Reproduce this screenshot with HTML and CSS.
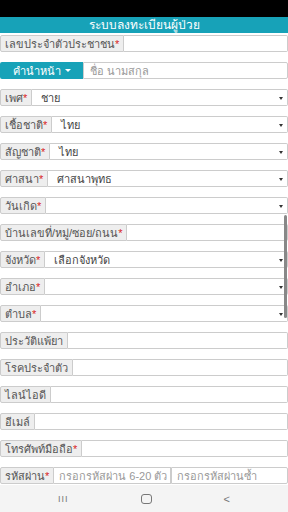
FILE: index.html
```html
<!DOCTYPE html>
<html lang="th">
<head>
    <meta charset="UTF-8">
    <meta name="viewport" content="width=device-width, initial-scale=1.0">
    <title>ระบบลงทะเบียนผู้ป่วย</title>
    <link rel="stylesheet" href="styles.css">
</head>
<body>
    <div class="statusbar"></div>
    <header>ระบบลงทะเบียนผู้ป่วย</header>
    <main class="form">
        <div class="row">
            <span class="label">เลขประจำตัวประชาชน<b>*</b></span>
            <span class="field"></span>
        </div>
        <div class="row">
            <span class="btn-title">คำนำหน้า <i class="caret-w"></i></span>
            <span class="field ph">ชื่อ นามสกุล</span>
        </div>
        <div class="row">
            <span class="label">เพศ<b>*</b></span>
            <span class="field select">ชาย</span>
        </div>
        <div class="row">
            <span class="label">เชื้อชาติ<b>*</b></span>
            <span class="field select">ไทย</span>
        </div>
        <div class="row">
            <span class="label">สัญชาติ<b>*</b></span>
            <span class="field select">ไทย</span>
        </div>
        <div class="row">
            <span class="label">ศาสนา<b>*</b></span>
            <span class="field select">ศาสนาพุทธ</span>
        </div>
        <div class="row">
            <span class="label">วันเกิด<b>*</b></span>
            <span class="field select"></span>
        </div>
        <div class="row">
            <span class="label">บ้านเลขที่/หมู่/ซอย/ถนน<b>*</b></span>
            <span class="field"></span>
        </div>
        <div class="row">
            <span class="label">จังหวัด<b>*</b></span>
            <span class="field select">เลือกจังหวัด</span>
        </div>
        <div class="row">
            <span class="label">อำเภอ<b>*</b></span>
            <span class="field select"></span>
        </div>
        <div class="row">
            <span class="label">ตำบล<b>*</b></span>
            <span class="field select"></span>
        </div>
        <div class="row">
            <span class="label">ประวัติแพ้ยา</span>
            <span class="field"></span>
        </div>
        <div class="row">
            <span class="label">โรคประจำตัว</span>
            <span class="field"></span>
        </div>
        <div class="row">
            <span class="label">ไลน์ไอดี</span>
            <span class="field"></span>
        </div>
        <div class="row">
            <span class="label">อีเมล์</span>
            <span class="field"></span>
        </div>
        <div class="row">
            <span class="label">โทรศัพท์มือถือ<b>*</b></span>
            <span class="field"></span>
        </div>
        <div class="row">
            <span class="label">รหัสผ่าน<b>*</b></span>
            <span class="field ph half">กรอกรหัสผ่าน 6-20 ตัว</span>
            <span class="field ph half">กรอกรหัสผ่านซ้ำ</span>
        </div>
    </main>
    <div class="scrollbar"></div>
    <nav class="navbar">
        <span class="nav-recent">III</span>
        <span class="nav-home"></span>
        <span class="nav-back">&lt;</span>
    </nav>
</body>
</html>
```
FILE: styles.css
```css
body {
    margin: 0;
    width: 288px;
    height: 512px;
    overflow: hidden;
    position: relative;
    font-family: "Liberation Sans", sans-serif;
    font-size: 11px;
    color: #555;
    background: #fff;
    display: flex;
    flex-direction: column;
}

.statusbar {
    height: 17px;
    background: #000;
}

header {
    height: 16px;
    line-height: 16px;
    background: #17a2b8;
    color: #fff;
    text-align: center;
    font-size: 12px;
}

/* Formulario */
.form {
    flex: 1;
    display: flex;
    flex-direction: column;
    gap: 10px;
    padding-top: 2px;
}

.row {
    display: flex;
    height: 17px;
}

.label {
    display: flex;
    align-items: center;
    padding: 0 4px;
    background: #eee;
    border: 1px solid #ccc;
    border-radius: 2px 0 0 2px;
    white-space: nowrap;
}

.label b {
    color: #d9231d;
    font-weight: normal;
}

.field {
    flex: 1;
    display: flex;
    align-items: center;
    padding: 0 9px;
    border: 1px solid #ccc;
    border-left: none;
    border-radius: 0 2px 2px 0;
    white-space: nowrap;
    overflow: hidden;
    position: relative;
    color: #444;
}

.field.ph {
    color: #999;
    padding-left: 6px;
}

.field.half {
    flex: 1 1 0;
    min-width: 0;
    padding-left: 5px;
    padding-right: 2px;
    border-radius: 0;
}

.field.half:last-child {
    border-left: 1px solid #ccc;
    border-radius: 0 2px 2px 0;
}

.select::after {
    content: "";
    position: absolute;
    right: 4px;
    top: 7px;
    border-left: 2px solid transparent;
    border-right: 2px solid transparent;
    border-top: 3px solid #333;
}

.btn-title {
    width: 83px;
    display: flex;
    align-items: center;
    justify-content: center;
    gap: 4px;
    background: #17a2b8;
    color: #fff;
    border-radius: 2px 0 0 2px;
}

.caret-w {
    border-left: 3px solid transparent;
    border-right: 3px solid transparent;
    border-top: 3px solid #fff;
}

.row:nth-child(2) .field {
    border-left: 1px solid #ccc;
}

.scrollbar {
    position: absolute;
    right: 1px;
    top: 215px;
    width: 3px;
    height: 103px;
    background: #888;
    border-radius: 2px;
}

/* Barra de navegacion */
.navbar {
    height: 27px;
    background: #f4f4f4;
    display: flex;
    align-items: center;
    justify-content: space-around;
    padding: 0 22px;
    color: #777;
}

.nav-recent {
    font-size: 9px;
    letter-spacing: 1px;
}

.nav-home {
    width: 9px;
    height: 8px;
    border: 1px solid #777;
    border-radius: 3px;
}

.nav-back {
    font-size: 11px;
}
```
